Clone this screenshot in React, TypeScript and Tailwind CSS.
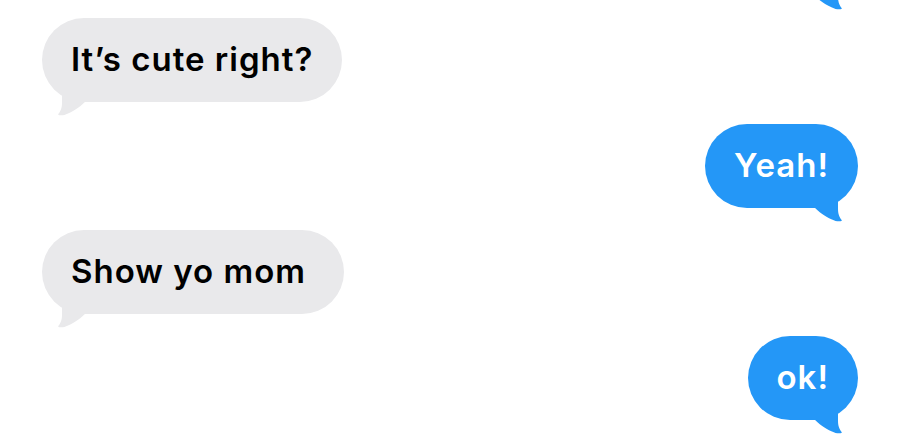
import React from "react";

function Tail({ side, color }: { side: "left" | "right"; color: string }) {
  const pos =
    side === "left"
      ? "absolute left-[12px] bottom-[-15px]"
      : "absolute right-[12px] bottom-[-15px] scale-x-[-1]";
  return (
    <svg className={pos} width="34" height="32" viewBox="0 0 34 32">
      <path
        d="M8 0 L8 18 C8 24 6 27 4 29.5 C6 31 10 30.5 14 28.5 C22 25 27 21 32 16 L32 0 Z"
        fill={color}
      />
    </svg>
  );
}

function Bubble({
  text,
  side,
  className = "",
}: {
  text?: string;
  side: "left" | "right";
  className?: string;
}) {
  const isLeft = side === "left";
  const color = isLeft ? "#e9e9eb" : "#2497f7";
  return (
    <div className={`flex ${isLeft ? "justify-start" : "justify-end"}`}>
      <div
        className={`relative h-[84px] rounded-[42px] pl-[29px] flex items-center text-[33px] font-semibold tracking-[1px] ${
          isLeft ? "bg-[#e9e9eb] text-black" : "bg-[#2497f7] text-white"
        } ${className}`}
      >
        {text ? <span className="relative z-10">{text}</span> : null}
        <Tail side={side} color={color} />
      </div>
    </div>
  );
}

export default function App() {
  return (
    <div
      className="w-[900px] h-[444px] bg-white overflow-hidden px-[42px]"
      style={{ fontFamily: "Inter, 'Noto Sans', sans-serif" }}
    >
      <div className="flex flex-col gap-[22px] mt-[-88px]">
        <Bubble side="right" className="w-[220px]" />
        <Bubble side="left" className="pr-[29px]" text="It’s cute right?" />
        <Bubble side="right" className="pr-[29px]" text="Yeah!" />
        <Bubble side="left" className="pr-[38px]" text="Show yo mom" />
        <Bubble side="right" className="pr-[29px]" text="ok!" />
      </div>
    </div>
  );
}
